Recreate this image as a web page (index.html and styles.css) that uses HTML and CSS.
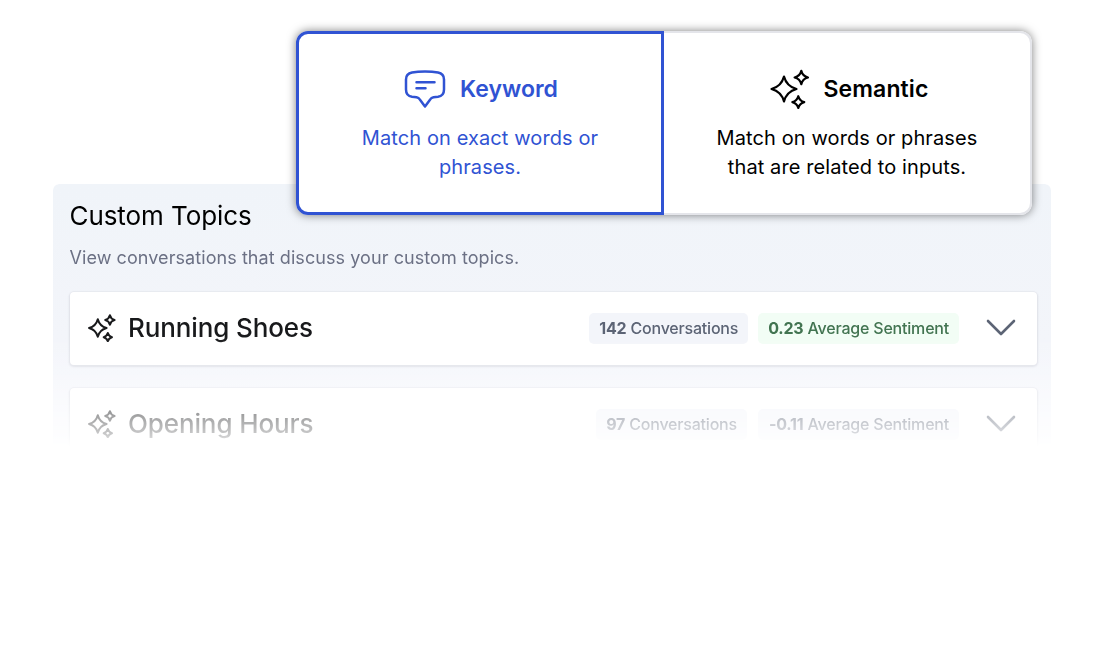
FILE: index.html
```html
<!DOCTYPE html>
<html lang="en">
<head>
<meta charset="utf-8">
<title>Custom Topics</title>
<link rel="stylesheet" href="styles.css">
</head>
<body>
<svg class="defs" aria-hidden="true">
  <symbol id="sparkles" viewBox="0 0 40 40">
    <path d="M14 7.5Q16.6 17.4 26.5 20Q16.6 22.6 14 32.5Q11.4 22.6 1.5 20Q11.4 17.4 14 7.5Z"/>
    <path d="M31.3 1.8Q32.6 7.2 38 8.5Q32.6 9.8 31.3 15.2Q30 9.8 24.6 8.5Q30 7.2 31.3 1.8Z"/>
    <path d="M28.3 27.2Q29.6 31.8 34.2 33.1Q29.6 34.4 28.3 39Q27 34.4 22.4 33.1Q27 31.8 28.3 27.2Z"/>
  </symbol>
  <symbol id="chevron" viewBox="0 0 30 18">
    <path d="M2 2L15 15L28 2"/>
  </symbol>
</svg>
<main class="stage">
  <section class="panel">
    <h1 class="title">Custom Topics</h1>
    <p class="subtitle">View conversations that discuss your custom topics.</p>
    <div class="topics">
      <article class="topic">
        <svg class="icon spark-small"><use href="#sparkles"/></svg>
        <h2 class="topic-name">Running Shoes</h2>
        <span class="badge"><b>142</b> Conversations</span>
        <span class="badge badge-positive sentiment"><b>0.23</b> Average Sentiment</span>
        <svg class="chevron"><use href="#chevron"/></svg>
      </article>
      <article class="topic">
        <svg class="icon spark-small"><use href="#sparkles"/></svg>
        <h2 class="topic-name">Opening Hours</h2>
        <span class="badge"><b>97</b> Conversations</span>
        <span class="badge sentiment sentiment-negative"><b>-0.11</b> Average Sentiment</span>
        <svg class="chevron"><use href="#chevron"/></svg>
      </article>
    </div>
  </section>
  <div class="picker">
    <div class="option option-selected">
      <div class="option-head">
        <svg class="icon bubble" viewBox="0 0 42 38"><path d="M21 1.500C26 1.500 30 1.800 34 2.600C38 3.400 40 5.800 40 9.500V19.500C40 24 38 26.200 34 26.800L29.500 27.300C28 27.600 27 28.200 26.200 29.400L21 36.500L15.800 29.400C15 28.200 14 27.600 12.500 27.300L8 26.800C4 26.200 2 24 2 19.500V9.500C2 5.800 4 3.400 8 2.600C12 1.800 16 1.500 21 1.500Z"/><path d="M12.500 12.300H30.500M12.500 18.200H21.500"/></svg>
        <h3 class="option-name">Keyword</h3>
      </div>
      <p class="option-text">Match on exact words or<br>phrases.</p>
    </div>
    <div class="option option-plain">
      <div class="option-head">
        <svg class="icon spark-large"><use href="#sparkles"/></svg>
        <h3 class="option-name">Semantic</h3>
      </div>
      <p class="option-text">Match on words or phrases<br>that are related to inputs.</p>
    </div>
  </div>
</main>
</body>
</html>
```
FILE: styles.css
```css
* { box-sizing: border-box; margin: 0; }
body { background: #fff; font-family: Inter, "Liberation Sans", sans-serif; color: #000; }
svg { fill: none; stroke: currentColor; stroke-linecap: round; stroke-linejoin: round; flex: none; }
.defs { position: absolute; width: 0; height: 0; }
.stage { position: relative; width: 1110px; height: 651px; overflow: hidden; padding: 184px 59px 0 53px; }
.panel {
  height: 264px;
  overflow: hidden;
  padding: 15px 14px 0 17px;
  border-radius: 6px 6px 0 0;
  background: linear-gradient(#f0f4f9, #f3f5fa 60%, #f7f8fd);
  -webkit-mask-image: linear-gradient(#000 150px, rgba(0, 0, 0, 0.8) 188px, rgba(0, 0, 0, 0.44) 228px, rgba(0, 0, 0, 0.22) 252px, transparent 263px);
  mask-image: linear-gradient(#000 150px, rgba(0, 0, 0, 0.8) 188px, rgba(0, 0, 0, 0.44) 228px, rgba(0, 0, 0, 0.22) 252px, transparent 263px);
}
.title { margin-left: -0.5px; font-size: 26px; font-weight: 400; line-height: 34px; letter-spacing: -0.08px; }
.subtitle { margin: 14px 0 0 -0.5px; font-size: 18px; line-height: 22px; letter-spacing: 0.07px; color: #6b7084; }
.topics { display: flex; flex-direction: column; gap: 23px; margin-top: 23px; }
.topic {
  display: flex;
  align-items: center;
  height: 73px;
  padding: 0 21px 1px 18px;
  border-radius: 4px;
  background: #fff;
  box-shadow: 0 0 0 0.5px #e4e5ec, 0 1px 2px 1px rgba(30, 35, 60, 0.1);
  color: #18191b;
}
.spark-small { width: 28px; height: 28px; stroke-width: 2.900; }
.topic-name { margin: 0 auto 0 12px; font-size: 26px; font-weight: 500; line-height: 34px; letter-spacing: -0.12px; }
.badge { height: 31px; padding: 0 10px; border-radius: 5px; background: #f3f5fa; color: #5c6475; font-size: 16px; font-weight: 500; line-height: 30px; letter-spacing: -0.2px; white-space: nowrap; }
.badge b { font-weight: 700; }
.badge-positive { background: #f2fdf5; color: #427451; }
.sentiment { margin-left: 10px; }
.sentiment-negative { padding-left: 11px; margin-left: 11px; }
.chevron { width: 30px; height: 18px; margin-left: 27px; color: #5c6475; stroke-width: 2.600; }
.picker {
  position: absolute;
  left: 296px;
  top: 31px;
  display: flex;
  width: 736px;
  height: 184px;
  border-radius: 12px;
  background: #fff;
  box-shadow: 0 0 10px rgba(0, 0, 0, 0.5);
}
.option { width: 368px; padding-top: 35px; border: 2.500px solid #e4e5ea; text-align: center; }
.option-selected { border: 3px solid #3053d3; border-radius: 12px 0 0 12px; color: #3053d3; }
.option-plain { padding-top: 36px; border-left: 0; border-radius: 0 12px 12px 0; }
.option-head { display: flex; align-items: center; justify-content: center; gap: 14px; height: 40px; padding-left: 2px; }
.bubble { width: 42px; height: 38px; stroke-width: 2.500; }
.spark-large { width: 40px; height: 40px; stroke-width: 2.200; }
.option-plain .option-head { padding-left: 4px; }
.option-name { font-size: 23px; font-weight: 600; line-height: 30px; }
.option-text { margin-top: 15px; font-size: 20px; line-height: 29px; letter-spacing: 0.1px; }
.option-plain .option-name { letter-spacing: 0.1px; }
```
